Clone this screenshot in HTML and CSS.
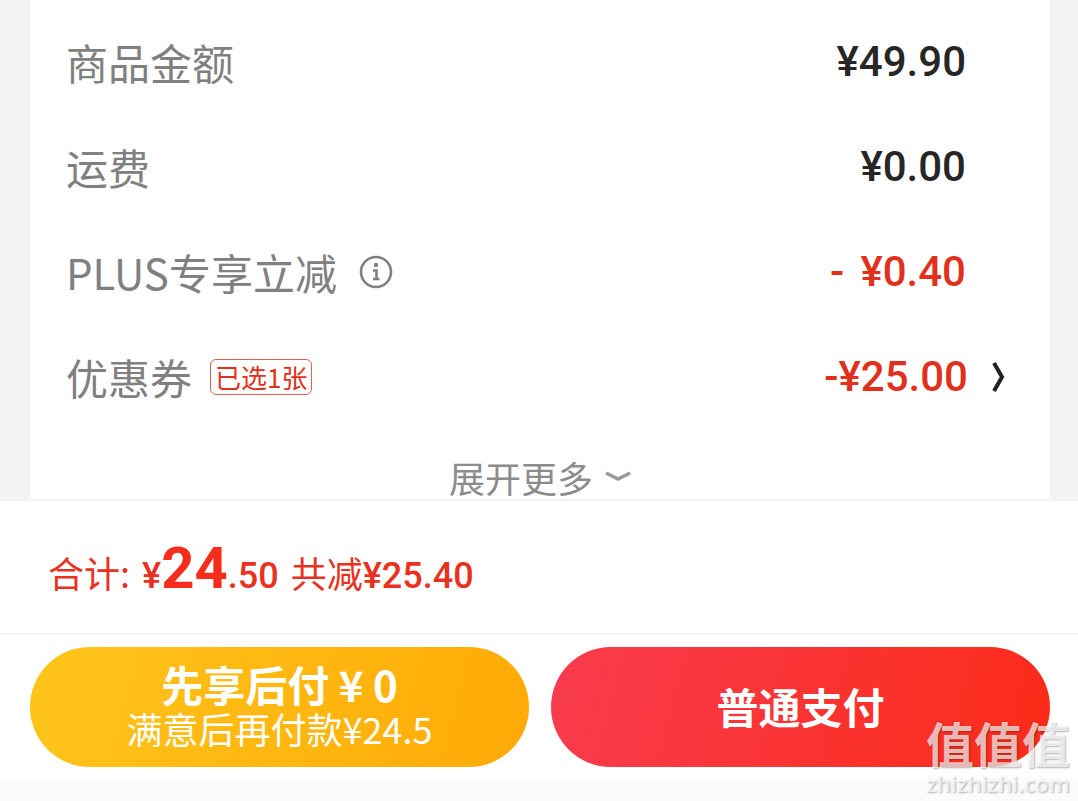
FILE: index.html
```html
<!DOCTYPE html>
<html lang="zh-CN">
<head>
<meta charset="utf-8">
<meta name="viewport" content="width=device-width, initial-scale=1">
<title>确认订单</title>
<link rel="stylesheet" href="styles.css">
</head>
<body>
<main class="checkout">
  <section class="summary">
    <dl class="rows">
      <div class="row"><dt class="label">商品金额</dt><dd class="price">¥49.90</dd></div>
      <div class="row"><dt class="label">运费</dt><dd class="price">¥0.00</dd></div>
      <div class="row">
        <dt class="label">PLUS专享立减
          <button class="icon-button info" type="button" aria-label="优惠说明">
            <svg width="34" height="34" viewBox="0 0 34 34" fill="none" stroke="#808080"><circle cx="17" cy="17" r="15" stroke-width="2.600"/><circle cx="17" cy="10" r="2.200" fill="#808080" stroke="none"/><path d="M14 15.500h3.500V24M14 24h6.500" stroke-width="2.600"/></svg>
          </button>
        </dt>
        <dd class="price discount"><span class="minus">-</span>¥0.40</dd>
      </div>
      <div class="row coupon">
        <dt class="label">优惠券<span class="tag">已选1张</span></dt>
        <dd class="price discount">-¥25.00
          <button class="icon-button" type="button" aria-label="选择优惠券">
            <svg width="14" height="32" viewBox="0 0 14 32" fill="none" stroke="#222" stroke-width="4"><path d="M2 2L10 16L2 30"/></svg>
          </button>
        </dd>
      </div>
    </dl>
    <button class="more" type="button">展开更多
      <svg width="26" height="12" viewBox="0 0 26 12" fill="none" stroke="#999" stroke-width="3.500"><path d="M1 2L13 8L25 2"/></svg>
    </button>
  </section>
  <section class="total">
    <span class="total-label">合计:</span>
    <span class="amount">¥<strong class="whole">24</strong>.50</span>
    <span class="saved">共减<span class="amount">¥25.40</span></span>
  </section>
  <section class="actions">
    <button class="pay later" type="button"><span class="pay-title">先享后付 ¥ 0</span><span class="pay-note">满意后再付款¥24.5</span></button>
    <button class="pay now" type="button"><span class="pay-title">普通支付</span></button>
  </section>
  <div class="watermark"><span class="mark-name">值值值</span><span class="mark-site">zhizhizhi.com</span></div>
</main>
</body>
</html>
```
FILE: styles.css
```css
* { box-sizing: border-box; }
body {
  margin: 0;
  background: #fbfbfc;
  font-family: "Noto Sans CJK SC", sans-serif;
}
button {
  margin: 0;
  padding: 0;
  border: 0;
  background: none;
  color: inherit;
  font-family: inherit;
  cursor: pointer;
}
.checkout {
  position: relative;
  min-height: 100vh;
}
.summary {
  padding: 0 28px 0 30px;
  background: #f4f4f4;
  border-bottom: 2px solid #f4f4f4;
}
.rows {
  margin: 0;
  padding: 9px 36px 26px;
  background: #fff;
}
.row {
  display: flex;
  align-items: center;
  justify-content: space-between;
  height: 105px;
  padding-right: 48px;
}
.label {
  display: flex;
  align-items: center;
  color: #808080;
  font-size: 42px;
  line-height: 60px;
}
.price {
  display: flex;
  align-items: center;
  margin: 0;
  color: #262626;
  font: 500 42px/60px Roboto, "Noto Sans CJK SC", sans-serif;
}
.discount { color: #e2301a; }
.minus { margin-right: 16px; }
.icon-button { display: flex; }
.info { margin-left: 22px; }
.coupon { padding-right: 8px; }
.coupon .icon-button { margin-left: 24px; }
.tag {
  margin-left: 18px;
  padding: 0 4px;
  border: 1px solid #e2604f;
  border-radius: 6px;
  color: #e2301a;
  font-size: 26px;
  line-height: 34px;
}
.more {
  display: flex;
  align-items: center;
  justify-content: center;
  gap: 12px;
  width: 100%;
  height: 44px;
  background: #fff;
  color: #8c8c8c;
  font-size: 36px;
  line-height: 44px;
}
.total {
  display: flex;
  align-items: baseline;
  gap: 12px;
  height: 134px;
  padding: 30px 48px 0;
  background: #fff;
  border-bottom: 2px solid #f4f4f4;
  color: #e8321f;
  font-size: 36px;
  line-height: 74px;
}
.amount {
  font-family: Roboto, "Noto Sans CJK SC", sans-serif;
  font-weight: 500;
}
.whole {
  color: #f62d1c;
  font-size: 58px;
  font-weight: 700;
}
.actions {
  display: flex;
  gap: 22px;
  padding: 12px 28px 12px 30px;
  background: #fff;
}
.pay {
  display: flex;
  flex: 1;
  flex-direction: column;
  align-items: center;
  justify-content: center;
  height: 120px;
  padding-bottom: 2px;
  border-radius: 60px;
  color: #fff;
}
.later { background: linear-gradient(105deg, #ffc51b, #ffaa06); }
.now { background: linear-gradient(105deg, #f83c4e, #fc2b18); }
.pay-title {
  font-size: 42px;
  font-weight: 700;
  line-height: 44px;
}
.pay-note {
  font-size: 36px;
  line-height: 44px;
}
.watermark {
  position: absolute;
  right: 8px;
  bottom: 4px;
  display: flex;
  flex-direction: column;
  align-items: center;
  color: rgba(255, 255, 255, 0.7);
  font-weight: 700;
  text-shadow: 1px 1px 2px rgba(0, 0, 0, 0.3);
  pointer-events: none;
}
.mark-name {
  font-size: 48px;
  line-height: 54px;
}
.mark-site {
  font: 600 22px/28px "Open Sans", sans-serif;
}
```
